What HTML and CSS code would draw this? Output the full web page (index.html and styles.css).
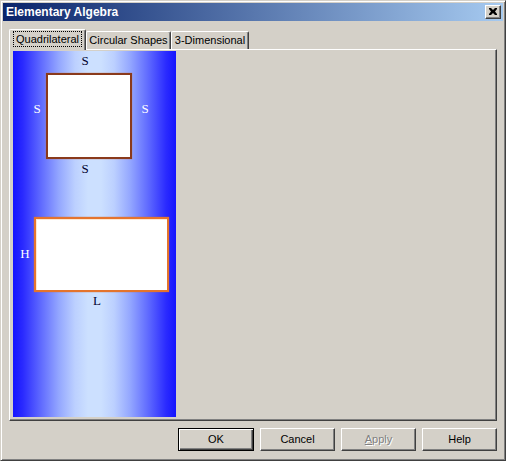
FILE: index.html
```html
<!DOCTYPE html>
<html>
<head>
<meta charset="utf-8">
<link rel="stylesheet" href="styles.css">
</head>
<body>
<div class="window">
  <div class="titlebar">
    <span class="title">Elementary Algebra</span>
    <span class="close"><svg width="8" height="7" viewBox="0 0 8 7"><path d="M0 0h2l2 2 2-2h2v1L6 3.5 8 6v1H6L4 5 2 7H0V6l2-2.5L0 1z" fill="#000"/></svg></span>
  </div>
  <div class="tabctl">
    <div class="tabs">
      <div class="tab active"><span class="focus">Quadrilateral</span></div>
      <div class="tab t2">Circular Shapes</div>
      <div class="tab t3">3-Dimensional</div>
    </div>
    <div class="panel">
      <div class="canvas">
        <span class="lbl dark" style="left:67px;top:3px">S</span>
        <span class="lbl light" style="left:19px;top:51px">S</span>
        <span class="lbl light" style="left:127px;top:51px">S</span>
        <span class="lbl dark" style="left:67px;top:111px">S</span>
        <div class="square"></div>
        <span class="lbl light" style="left:7px;top:196px">H</span>
        <span class="lbl dark" style="left:79px;top:243px">L</span>
        <div class="rect"></div>
      </div>
    </div>
  </div>
  <div class="buttons">
    <div class="btn default">OK</div>
    <div class="btn">Cancel</div>
    <div class="btn disabled"><u>A</u>pply</div>
    <div class="btn">Help</div>
  </div>
</div>
</body>
</html>
```
FILE: styles.css
```css
html, body {
  margin: 0;
  padding: 0;
  background: #d4d0c8;
}
.window {
  box-sizing: border-box;
  width: 506px;
  height: 461px;
  background: #d4d0c8;
  border: 1px solid;
  border-color: #d4d0c8 #404040 #404040 #d4d0c8;
  box-shadow: inset 1px 1px #ffffff, inset -1px -1px #808080;
  padding: 2px;
  font-family: "Liberation Sans", Arial, sans-serif;
  font-size: 11px;
  color: #000;
}
.titlebar {
  height: 18px;
  background: linear-gradient(to right, #0a246a, #a6caf0);
  display: flex;
  align-items: center;
  justify-content: space-between;
  padding: 0 2px 0 3px;
}
.title {
  color: #fff;
  font-weight: bold;
  font-size: 12px;
}
.close {
  box-sizing: border-box;
  width: 16px;
  height: 14px;
  background: #d4d0c8;
  border: 1px solid;
  border-color: #ffffff #404040 #404040 #ffffff;
  box-shadow: inset -1px -1px #808080;
  display: flex;
  align-items: center;
  justify-content: center;
  padding: 0 1px 1px 0;
}
.tabctl {
  margin: 8px 6px 0 6px;
}
.tabs {
  display: flex;
  align-items: flex-end;
  height: 20px;
  position: relative;
  z-index: 1;
}
.tab {
  box-sizing: border-box;
  height: 18px;
  border-top: 1px solid #fff;
  border-left: 1px solid #fff;
  border-right: 1px solid #404040;
  box-shadow: inset -1px 0 #808080;
  border-radius: 2px 2px 0 0;
  display: flex;
  align-items: center;
  justify-content: center;
  padding-bottom: 1px;
  background: #d4d0c8;
}
.tab.active {
  width: 77px;
  height: 21px;
  margin-bottom: -1px;
  padding-bottom: 3px;
}
.tab.t2 { width: 85px; }
.tab.t3 { width: 78px; }
.focus {
  outline: 1px dotted #000;
  outline-offset: 1px;
  padding: 0 1px;
}
.panel {
  box-sizing: border-box;
  height: 372px;
  border: 1px solid;
  border-color: #fff #404040 #404040 #fff;
  box-shadow: inset -1px -1px #808080;
  padding: 1px 0 0 3px;
}
.canvas {
  position: relative;
  width: 163px;
  height: 366px;
  background: linear-gradient(to right, #1414ff 0%, #2a2aff 6%, #5a64ff 16%, #93a6ff 28%, #bcd0ff 38%, #cce0ff 46%, #cce0ff 54%, #bcd0ff 62%, #93a6ff 72%, #5a64ff 84%, #2a2aff 94%, #1414ff 100%);
}
.lbl {
  position: absolute;
  width: 10px;
  text-align: center;
  font-family: "Liberation Serif", "Times New Roman", serif;
  font-size: 13px;
  line-height: 14px;
}
.lbl.dark { color: #000030; }
.lbl.light { color: #fff; }
.square {
  position: absolute;
  left: 33px;
  top: 22px;
  width: 86px;
  height: 86px;
  box-sizing: border-box;
  background: #fff;
  border: 2px solid #8a3a1c;
  box-shadow: 0 0 1px #c07050;
}
.rect {
  position: absolute;
  left: 21px;
  top: 166px;
  width: 135px;
  height: 75px;
  box-sizing: border-box;
  background: #fff;
  border: 2px solid #e4742e;
  box-shadow: inset 1px 1px #ffe8d0, 0 0 1px #c86a3a;
}
.buttons {
  display: flex;
  justify-content: flex-end;
  gap: 6px;
  margin: 7px 6px 0 0;
}
.btn {
  box-sizing: border-box;
  width: 75px;
  height: 23px;
  border: 1px solid;
  border-color: #fff #404040 #404040 #fff;
  box-shadow: inset -1px -1px #808080;
  display: flex;
  align-items: center;
  justify-content: center;
  padding-bottom: 1px;
}
.btn.default {
  border: 1px solid #000;
  box-shadow: inset 1px 1px #fff, inset -1px -1px #404040, inset -2px -2px #808080;
  width: 76px;
}
.btn.disabled {
  color: #808080;
  text-shadow: 1px 1px #fff;
}
```
